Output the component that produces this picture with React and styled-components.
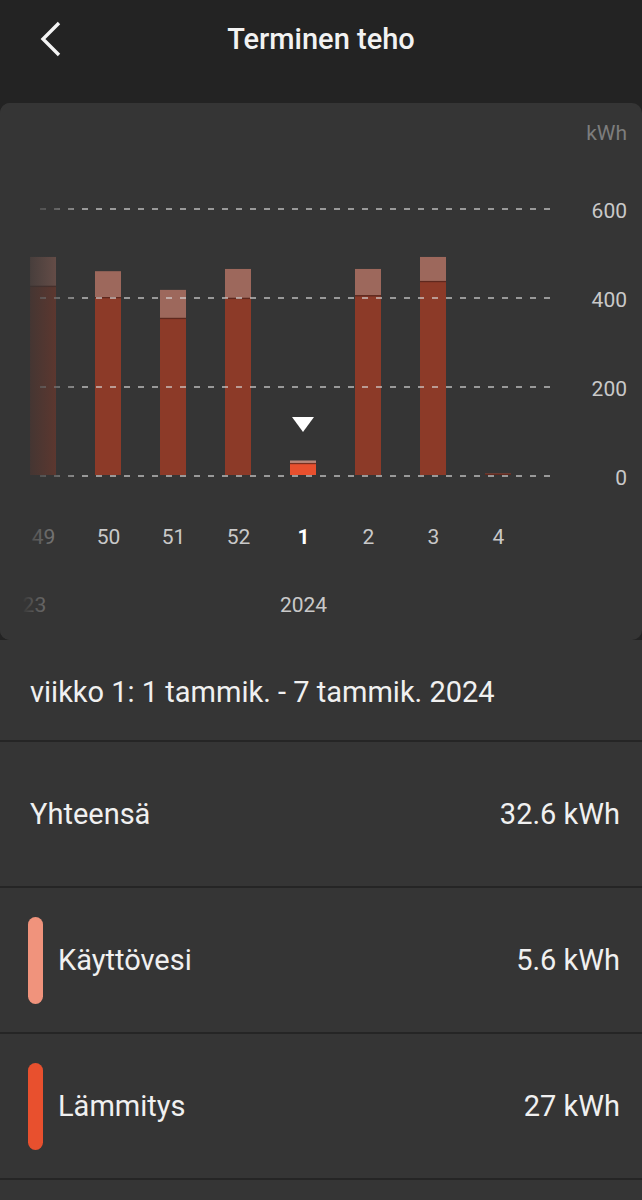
import React from "react";
import styled, { createGlobalStyle } from "styled-components";

const GlobalStyle = createGlobalStyle`
  html, body {
    margin: 0;
    padding: 0;
    background: #232323;
  }
  body {
    font-family: Roboto, "Noto Sans", sans-serif;
    -webkit-font-smoothing: antialiased;
  }
`;

const Page = styled.div`
  width: 642px;
  min-height: 1200px;
  display: flex;
  flex-direction: column;
  background: #232323;
  color: #efefef;
`;

const TopBar = styled.header`
  height: 78px;
  display: grid;
  grid-template-columns: 80px 1fr 80px;
  align-items: center;
`;

const BackButton = styled.button`
  border: 0;
  background: none;
  padding: 0;
  margin-left: 38px;
  width: 26px;
  height: 38px;
  display: flex;
  align-items: center;
  justify-content: center;
  color: #f4f4f4;
`;

const Title = styled.h1`
  margin: 0;
  text-align: center;
  font-size: 29px;
  font-weight: 500;
  color: #f2f2f2;
`;

const ChartCard = styled.section`
  position: relative;
  margin-top: 25px;
  height: 537px;
  background: #353535;
  border-radius: 10px;
  overflow: hidden;
`;

const UnitRow = styled.div`
  padding: 18px 15px 0 0;
  height: 24px;
  line-height: 24px;
  text-align: right;
  font-size: 21px;
  color: #7d7d7d;
`;

const PlotRow = styled.div`
  display: grid;
  grid-template-columns: 560px 1fr;
`;

const Axis = styled.div`
  display: flex;
  flex-direction: column;
  align-items: flex-end;
  gap: 65px;
  padding: 54px 15px 0 0;
`;

const AxisLabel = styled.span`
  height: 24px;
  line-height: 24px;
  font-size: 21px;
  color: #c9c9c9;
`;

const TickRow = styled.div`
  display: grid;
  grid-template-columns: repeat(8, 65px);
  padding-left: 11px;
  margin-top: ${(p) => p.$gap}px;
`;

const Tick = styled.span`
  height: 24px;
  line-height: 24px;
  text-align: center;
  font-size: 21px;
  font-weight: ${(p) => (p.$active ? 700 : 400)};
  color: ${(p) => (p.$active ? "#ffffff" : "#c9c9c9")};
`;

const YearTick = styled(Tick)`
  grid-column: ${(p) => p.$col};
  justify-self: ${(p) => (p.$edge ? "start" : "center")};
  margin-left: ${(p) => (p.$edge ? "-12px" : "0")};
`;

const Fade = styled.div`
  position: absolute;
  left: 0;
  top: 0;
  bottom: 0;
  width: 82px;
  pointer-events: none;
  background: linear-gradient(
    to right,
    rgba(53, 53, 53, 1) 22px,
    rgba(53, 53, 53, 0.8) 32px,
    rgba(53, 53, 53, 0.55) 56px,
    rgba(53, 53, 53, 0) 82px
  );
`;

const List = styled.div`
  flex: 1;
  background: #353535;
`;

const Row = styled.div`
  display: flex;
  align-items: center;
  gap: 15px;
  height: ${(p) => p.$h}px;
  padding: ${(p) => (p.$h < 120 ? "4px" : "0")} 22px 0 ${(p) => (p.$pill ? 28 : 30)}px;
  box-sizing: border-box;
  border-bottom: 2px solid #252525;
  font-size: 29px;
  color: #f0f0f0;
`;

const Label = styled.span`
  flex: 1;
`;

const Value = styled.span`
  text-align: right;
`;

const Pill = styled.span`
  width: 15px;
  height: 87px;
  border-radius: 8px;
  background: ${(p) => p.$color};
`;

const SCALE = 89 / 200;
const BASE = 330;

const weeks = [
  { label: "49", total: 490, heat: 425 },
  { label: "50", total: 458, heat: 400 },
  { label: "51", total: 416, heat: 353 },
  { label: "52", total: 463, heat: 398 },
  { label: "1", total: 32.6, heat: 27, active: true },
  { label: "2", total: 463, heat: 404 },
  { label: "3", total: 490, heat: 436 },
  { label: "4", total: 4, heat: 3 },
];

const Chevron = () => (
  <svg width="24" height="36" viewBox="0 0 24 36">
    <path d="M20 2 L4 18 L20 34" fill="none" stroke="currentColor" strokeWidth="3.4" />
  </svg>
);

const Plot = () => (
  <svg width="560" height="335" viewBox="0 0 560 335">
    {weeks.map((w, i) => {
      const x = 30 + i * 65;
      const total = w.total * SCALE;
      const heat = w.heat * SCALE;
      return (
        <g key={w.label}>
          <rect x={x} y={BASE - total} width="26" height={total - heat} fill={w.active ? "#b98679" : "#9d685c"} />
          <rect x={x} y={BASE - heat} width="26" height={heat} fill={w.active ? "#e8502e" : "#8c3a28"} />
          <rect x={x} y={BASE - heat} width="26" height="1.2" fill="#4b2119" opacity="0.7" />
        </g>
      );
    })}
    {[64, 153, 242, 331].map((y) => (
      <line key={y} x1="40" x2="556" y1={y} y2={y} stroke="rgba(215,215,215,0.62)" strokeWidth="2" strokeDasharray="6 8" />
    ))}
    <polygon points="292,272 314,272 303,287" fill="#ffffff" />
  </svg>
);

export default function App() {
  return (
    <>
      <GlobalStyle />
      <Page>
        <TopBar>
          <BackButton aria-label="Takaisin">
            <Chevron />
          </BackButton>
          <Title>Terminen teho</Title>
          <span />
        </TopBar>

        <ChartCard>
          <UnitRow>kWh</UnitRow>
          <PlotRow>
            <Plot />
            <Axis>
              <AxisLabel>600</AxisLabel>
              <AxisLabel>400</AxisLabel>
              <AxisLabel>200</AxisLabel>
              <AxisLabel>0</AxisLabel>
            </Axis>
          </PlotRow>
          <TickRow $gap={35}>
            {weeks.map((w) => (
              <Tick key={w.label} $active={w.active}>
                {w.label}
              </Tick>
            ))}
          </TickRow>
          <TickRow $gap={44}>
            <YearTick $col={1} $edge>
              2023
            </YearTick>
            <YearTick $col={5}>2024</YearTick>
          </TickRow>
          <Fade />
        </ChartCard>

        <List>
          <Row $h={102}>viikko 1: 1 tammik. - 7 tammik. 2024</Row>
          <Row $h={146}>
            <Label>Yhteensä</Label>
            <Value>32.6 kWh</Value>
          </Row>
          <Row $h={146} $pill>
            <Pill $color="#f0937c" />
            <Label>Käyttövesi</Label>
            <Value>5.6 kWh</Value>
          </Row>
          <Row $h={146} $pill>
            <Pill $color="#e8502e" />
            <Label>Lämmitys</Label>
            <Value>27 kWh</Value>
          </Row>
        </List>
      </Page>
    </>
  );
}
